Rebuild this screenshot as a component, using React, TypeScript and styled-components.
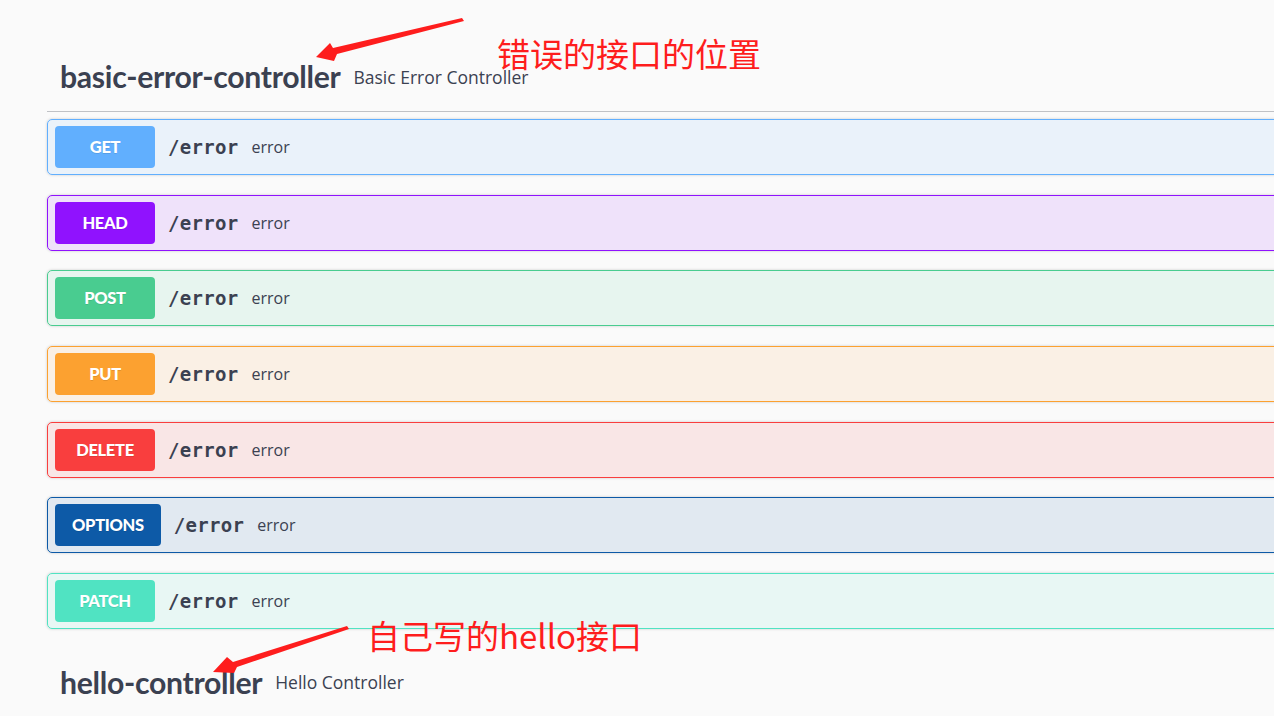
import React from "react";
import styled, { createGlobalStyle } from "styled-components";

const Global = createGlobalStyle`
  html, body { margin: 0; padding: 0; background: #fafafa; overflow: hidden; }
  body { font-family: "Open Sans", sans-serif; color: #3b4151; }
`;

const Page = styled.div`
  position: relative;
  width: 1274px;
  height: 716px;
  overflow: hidden;
  background: #fafafa;
`;

const Content = styled.div`
  padding: 42px 0 0 47px;
  width: 1260px;
`;

const TagSection = styled.section`
  margin-bottom: 0;
`;

const TagHeader = styled.h3`
  display: flex;
  align-items: center;
  gap: 13px;
  margin: 0 0 7px;
  height: 44px;
  padding: 12px 0 13px 13px;
  border-bottom: 1px solid rgba(59, 65, 81, 0.3);
`;

const TagName = styled.span`
  font-family: "Lato", sans-serif;
  font-weight: 700;
  font-size: 30.2px;
  letter-spacing: -0.3px;
  color: #3b4151;
`;

const TagDesc = styled.small`
  font-family: "Open Sans", sans-serif;
  font-weight: 400;
  font-size: 17.5px;
  color: #3b4151;
  padding-top: 1px;
`;

const Ops = styled.div`
  display: flex;
  flex-direction: column;
  gap: 19.67px;
  margin-bottom: 19px;
`;

const Row = styled.div<{ $c: string }>`
  display: flex;
  align-items: center;
  height: 56px;
  box-sizing: border-box;
  padding: 0 7px;
  border: 1px solid ${(p) => p.$c};
  border-radius: 5px;
  background: ${(p) => p.$c}1a;
  box-shadow: 0 0 3px rgba(0, 0, 0, 0.19);
`;

const Method = styled.span<{ $c: string }>`
  display: flex;
  align-items: center;
  justify-content: center;
  min-width: 100px;
  height: 42px;
  box-sizing: border-box;
  padding: 0 17px;
  border-radius: 4px;
  background: ${(p) => p.$c};
  color: #fff;
  font-family: "Lato", sans-serif;
  font-weight: 900;
  font-size: 16.5px;
  letter-spacing: -0.3px;
  text-shadow: 0 1px 0 rgba(0, 0, 0, 0.1);
`;

const Path = styled.span`
  margin-left: 13px;
  font-family: "DejaVu Sans Mono", monospace;
  font-weight: 700;
  font-size: 19px;
  letter-spacing: 0.3px;
  color: #3b4151;
`;

const Desc = styled.span`
  margin-left: 13px;
  font-family: "Open Sans", sans-serif;
  font-size: 16px;
  color: #3b4151;
`;

const Note = styled.div<{ $x: number; $y: number }>`
  position: absolute;
  left: ${(p) => p.$x}px;
  top: ${(p) => p.$y}px;
  font-family: "Noto Sans CJK SC", sans-serif;
  font-size: 33px;
  line-height: 32px;
  color: #fe1d1d;
  white-space: nowrap;
`;

const Overlay = styled.svg`
  position: absolute;
  left: 0;
  top: 0;
  pointer-events: none;
`;

const ops = [
  { m: "GET", c: "#61affe" },
  { m: "HEAD", c: "#9012fe" },
  { m: "POST", c: "#49cc90" },
  { m: "PUT", c: "#fca130" },
  { m: "DELETE", c: "#f93e3e" },
  { m: "OPTIONS", c: "#0d5aa7" },
  { m: "PATCH", c: "#50e3c2" },
];

export default function App() {
  return (
    <Page>
      <Global />
      <Content>
        <TagSection>
          <TagHeader>
            <TagName>basic-error-controller</TagName>
            <TagDesc>Basic Error Controller</TagDesc>
          </TagHeader>
          <Ops>
            {ops.map((o) => (
              <Row key={o.m} $c={o.c}>
                <Method $c={o.c}>{o.m}</Method>
                <Path>/error</Path>
                <Desc>error</Desc>
              </Row>
            ))}
          </Ops>
        </TagSection>
        <TagSection>
          <TagHeader>
            <TagName>hello-controller</TagName>
            <TagDesc>Hello Controller</TagDesc>
          </TagHeader>
        </TagSection>
      </Content>
      <Overlay width="1274" height="716" viewBox="0 0 1274 716">
        <polygon
          fill="#fe1d1d"
          points="462,18 464,21 337,54 334,61 316,57 330,43 333,48"
        />
        <polygon
          fill="#fe1d1d"
          points="347,626 349,629 237,667 234,673 213,672 227,657 233,662"
        />
      </Overlay>
      <Note $x={497} $y={37}>错误的接口的位置</Note>
      <Note $x={367} $y={619}>自己写的hello接口</Note>
    </Page>
  );
}
